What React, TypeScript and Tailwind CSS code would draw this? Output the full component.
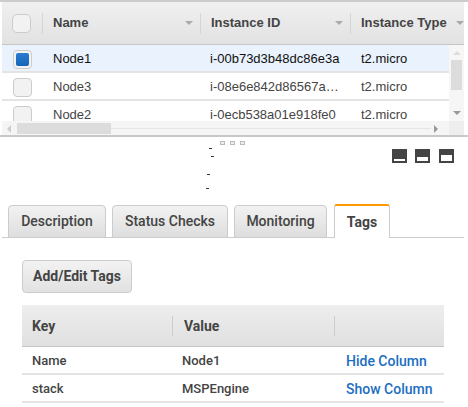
const instances = [
  { name: 'Node1', id: 'i-00b73d3b48dc86e3a', type: 't2.micro', selected: true },
  { name: 'Node3', id: 'i-08e6e842d86567a…', type: 't2.micro', selected: false },
  { name: 'Node2', id: 'i-0ecb538a01e918fe0', type: 't2.micro', selected: false },
]

const specks = [
  'left-[209px] top-[11px]',
  'left-[211px] top-[19px]',
  'left-[207px] top-[37px]',
  'left-[206px] top-[51px]',
]

const SortArrow = () => (
  <span className="h-0 w-0 border-x-[4px] border-t-[4px] border-x-transparent border-t-[#aaa]" />
)

const HeaderCell = ({ label, width }: { label: string; width: string }) => (
  <div className={`flex h-[21px] shrink-0 items-center justify-between border-r border-[#d5d5d5] pl-[10px] pr-[7px] ${width}`}>
    <span>{label}</span>
    <SortArrow />
  </div>
)

const Checkbox = ({ checked }: { checked?: boolean }) => (
  <div className="flex h-[19px] w-[19px] items-center justify-center rounded-[4px] border border-[#ccc] bg-[#f2f2f2]">
    {checked && <div className="h-[13px] w-[13px] rounded-[2px] bg-gradient-to-b from-[#2a7bd1] to-[#1565b8]" />}
  </div>
)

const InstanceTable = () => (
  <div className="relative h-[137px] overflow-hidden border-t-2 border-b-2 border-[#ccc] border-b-[#c8c8c8] font-['Liberation_Sans',Arial,sans-serif] text-[13px]">
    <div className="ml-[2px] w-[462px]">
      <div className="flex h-[43px] items-center border-b border-[#c6c6c6] bg-gradient-to-b from-[#f0f0f0] to-[#e2e2e2] font-bold text-[#444]">
        <div className="flex h-[21px] w-[41px] shrink-0 items-center border-r border-[#d5d5d5] pl-[10px]">
          <div className="h-[19px] w-[19px] rounded-[5px] border border-[#ccc] bg-[#f2f2f2]" />
        </div>
        <HeaderCell label="Name" width="w-[158px]" />
        <HeaderCell label="Instance ID" width="w-[150px]" />
        <div className="flex min-w-0 flex-1 items-center justify-between pl-[10px]">
          <span>Instance Type</span>
          <SortArrow />
        </div>
      </div>
      {instances.map((row) => (
        <div
          key={row.name}
          className={`flex h-[28px] items-center border-b-2 border-[#e4e4e4] pt-[2px] ${row.selected ? 'bg-[#e9f2fd] text-[#111]' : 'bg-white text-[#444]'}`}
        >
          <div className="flex w-[41px] shrink-0 pl-[11px]">
            <Checkbox checked={row.selected} />
          </div>
          <div className="w-[158px] shrink-0 pl-[10px]">{row.name}</div>
          <div className="w-[150px] shrink-0 pl-[9px]">{row.id}</div>
          <div className="pl-[10px]">{row.type}</div>
        </div>
      ))}
    </div>

    {/* overlay scrollbars */}
    <div className="absolute left-[449px] top-[43px] flex h-[76px] w-[15px] flex-col items-center bg-[#f6f6f6] pt-[6px]">
      <span className="h-0 w-0 border-x-[4px] border-b-[4px] border-x-transparent border-b-[#ddd]" />
      <div className="mt-[5px] h-[30px] w-[11px] shrink-0 bg-[#dcdcdc]" />
      <span className="mt-[21px] h-0 w-0 border-x-[4px] border-t-[4px] border-x-transparent border-t-[#999]" />
    </div>
    <div className="absolute left-[2px] top-[119px] flex h-[15px] w-[462px] items-center bg-[#f5f5f5]">
      <span className="ml-[5px] h-0 w-0 border-y-[4px] border-r-[4px] border-y-transparent border-r-[#ccc]" />
      <div className="ml-[6px] h-[11px] w-[94px] bg-[#dcdcdc]" />
      <div className="h-px w-[320px] bg-[#e6e6e6]" />
      <span className="ml-[3px] h-0 w-0 border-y-[4px] border-l-[4px] border-y-transparent border-l-[#999]" />
      <div className="ml-auto h-[15px] w-[15px] bg-[#eee]" />
    </div>
  </div>
)

const PanelIcon = ({ fill }: { fill: string }) => (
  <div className="flex h-[14px] w-[15px] items-end justify-center bg-[#444] px-[2px] pb-[2px]">
    <div className={`w-full bg-white ${fill}`} />
  </div>
)

const Divider = () => (
  <div className="relative h-[68px]">
    <div className="flex gap-[5px] pl-[220px] pt-[4px]">
      {[0, 1, 2].map((i) => (
        <div key={i} className="h-[4px] w-[5px] border border-[#bbb] bg-[#eee]" />
      ))}
    </div>
    {specks.map((pos) => (
      <div key={pos} className={`absolute h-px w-[3px] bg-[#334] ${pos}`} />
    ))}
    <div className="mt-[4px] flex justify-end pr-[14px]">
      <PanelIcon fill="h-[2px]" />
      <div className="ml-[8px]">
        <PanelIcon fill="h-[4px]" />
      </div>
      <div className="ml-[9px]">
        <PanelIcon fill="h-[6px]" />
      </div>
    </div>
  </div>
)

const tabClass =
  '-mb-px flex h-[33px] items-center justify-center rounded-t-[4px] border border-[#ccc] bg-gradient-to-b from-[#f2f2f2] to-[#dedede]'

const Tabs = () => (
  <div className="ml-[2px] flex h-[33px] w-[462px] items-end border-b border-[#ccc] pl-[6px] font-['Roboto',sans-serif] text-[14px] font-medium text-[#444]">
    <div className={`${tabClass} w-[98px]`}>Description</div>
    <div className={`${tabClass} ml-[6px] w-[116px]`}>Status Checks</div>
    <div className={`${tabClass} ml-[6px] w-[93px]`}>Monitoring</div>
    <div className="-mb-px ml-[7px] flex h-[34px] w-[56px] items-center justify-center rounded-t-[3px] border-x border-t-2 border-[#ccc] border-t-[#f90] bg-white font-bold">
      Tags
    </div>
  </div>
)

const TagTable = () => (
  <div className="ml-[22px] mt-[12px] w-[422px] font-['Roboto',sans-serif] text-[13px] text-[#444]">
    <div className="flex h-[42px] items-center border-b border-[#c6c6c6] bg-gradient-to-b from-[#eee] to-[#e0e0e0] text-[14px] font-bold">
      <div className="h-[20px] w-[151px] border-r border-[#ccc] pl-[10px] leading-[20px]">Key</div>
      <div className="h-[20px] w-[162px] border-r border-[#ccc] pl-[11px] leading-[20px]">Value</div>
    </div>
    {[
      { key: 'Name', value: 'Node1', action: 'Hide Column' },
      { key: 'stack', value: 'MSPEngine', action: 'Show Column' },
    ].map((tag) => (
      <div key={tag.key} className="flex h-[28px] items-center border-b-2 border-[#e4e4e4] pt-[2px]">
        <div className="w-[150px] pl-[10px] font-medium">{tag.key}</div>
        <div className="w-[164px] pl-[10px] font-medium">{tag.value}</div>
        <div className="pl-[10px] text-[14px] font-medium text-[#1b6ec2]">{tag.action}</div>
      </div>
    ))}
  </div>
)

const App = () => {
  return (
    <div className="h-[407px] w-[468px] overflow-hidden bg-white">
      <InstanceTable />
      <Divider />
      <Tabs />
      <button className="ml-[22px] mt-[22px] block h-[33px] w-[110px] rounded-[4px] border border-[#ccc] bg-gradient-to-b from-[#f2f2f2] to-[#e2e2e2] font-['Roboto',sans-serif] text-[14px] font-bold text-[#444]">
        Add/Edit Tags
      </button>
      <TagTable />
    </div>
  )
}

export default App
